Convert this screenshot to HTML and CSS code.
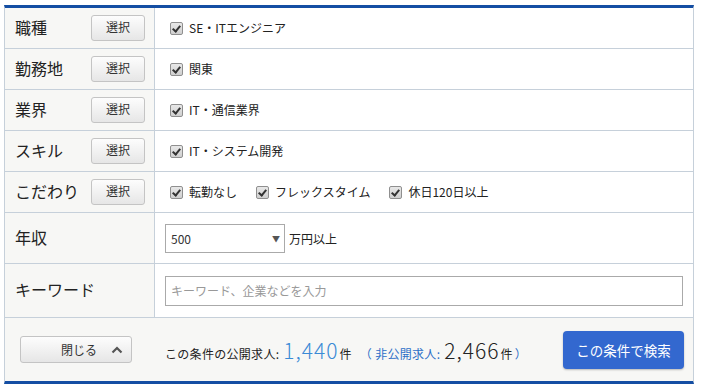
FILE: index.html
```html
<!DOCTYPE html>
<html lang="ja">
<head>
<meta charset="utf-8">
<link rel="stylesheet" href="styles.css">
</head>
<body>
<div class="panel">
  <div class="row">
    <div class="label"><span class="ltext">職種</span><button class="sel">選択</button></div>
    <div class="value"><span class="chk"><i class="box"></i>SE・ITエンジニア</span></div>
  </div>
  <div class="row">
    <div class="label"><span class="ltext">勤務地</span><button class="sel">選択</button></div>
    <div class="value"><span class="chk"><i class="box"></i>関東</span></div>
  </div>
  <div class="row">
    <div class="label"><span class="ltext">業界</span><button class="sel">選択</button></div>
    <div class="value"><span class="chk"><i class="box"></i>IT・通信業界</span></div>
  </div>
  <div class="row">
    <div class="label"><span class="ltext">スキル</span><button class="sel">選択</button></div>
    <div class="value"><span class="chk"><i class="box"></i>IT・システム開発</span></div>
  </div>
  <div class="row">
    <div class="label"><span class="ltext">こだわり</span><button class="sel">選択</button></div>
    <div class="value"><span class="chk"><i class="box"></i>転勤なし</span><span class="chk"><i class="box"></i>フレックスタイム</span><span class="chk"><i class="box"></i>休日120日以上</span></div>
  </div>
  <div class="row row-salary">
    <div class="label"><span class="ltext">年収</span></div>
    <div class="value"><div class="select"><span>500</span><span class="arrow">▼</span></div><span class="unit">万円以上</span></div>
  </div>
  <div class="row row-kw">
    <div class="label"><span class="ltext">キーワード</span></div>
    <div class="value"><div class="input">キーワード、企業などを入力</div></div>
  </div>
  <div class="footer">
    <button class="close"><span>閉じる</span><svg class="chev" width="12" height="8" viewBox="0 0 12 8"><path d="M1.5 6.5 L6 2 L10.5 6.5" fill="none" stroke="#555" stroke-width="2.2"/></svg></button>
    <div class="count">この条件の公開求人:<span class="num pub">1,440</span>件<span class="paren">（</span><span class="hid">非公開求人:</span><span class="num">2,466</span>件<span class="paren r">）</span></div>
    <button class="search">この条件で検索</button>
  </div>
</div>
</body>
</html>
```
FILE: styles.css
```css
* { box-sizing: border-box; }
body {
  margin: 5px 0 0 4px;
  font-family: "Noto Sans CJK JP", "Noto Sans", sans-serif;
  color: #222;
  background: #fff;
}
.panel {
  width: 690px;
  border-top: 3px solid #144ea3;
  border-left: 1px solid #c6d0da;
  border-right: 1px solid #c6d0da;
  border-bottom: 3px solid #144ea3;
}
.row {
  display: flex;
  height: 41px;
  border-bottom: 1px solid #c6d0da;
}
.row-salary { height: 51px; }
.row-kw { height: 54px; }
.label {
  width: 150px;
  flex: none;
  background: #f7f7f5;
  border-right: 1px solid #c6d0da;
  display: flex;
  align-items: center;
  justify-content: space-between;
  padding: 0 9px 0 10px;
}
.ltext {
  font-size: 16px;
  line-height: 20px;
  color: #222;
  margin-top: -3px;
}
.sel {
  width: 54px;
  height: 26px;
  border: 1px solid #c4c4c4;
  border-radius: 3px;
  background: linear-gradient(#fdfdfd, #e6e6e6);
  font-family: inherit;
  font-size: 12px;
  color: #333;
  padding: 0;
  line-height: 1;
  padding-bottom: 2px;
}
.value {
  flex: 1;
  display: flex;
  align-items: center;
  padding-left: 10px;
  font-size: 12px;
}
.chk {
  display: inline-flex;
  align-items: center;
  margin-right: 14px;
  line-height: 16px;
}
.box {
  width: 13px;
  height: 13px;
  margin: 0 6px 0 5px;
  border: 1px solid #8f8f8f;
  border-radius: 2px;
  background: linear-gradient(#e8e8e8, #cfcfcf);
  position: relative;
  display: inline-block;
}
.box::after {
  content: "";
  position: absolute;
  left: 3px;
  top: 1px;
  width: 3px;
  height: 6px;
  border-right: 2px solid #333;
  border-bottom: 2px solid #333;
  transform: rotate(40deg);
}
.select {
  width: 120px;
  height: 29px;
  border: 1px solid #aaa;
  background: #fff;
  display: flex;
  align-items: center;
  justify-content: space-between;
  padding: 0 4px 0 5px;
  font-size: 12px;
  color: #333;
}
.arrow {
  font-size: 8px;
  color: #555;
}
.unit {
  margin-left: 4px;
  font-size: 12px;
}
.input {
  width: 518px;
  height: 30px;
  border: 1px solid #aaa;
  display: flex;
  align-items: center;
  padding-left: 5px;
  font-size: 12px;
  color: #999;
}
.footer {
  height: 63px;
  background: #f7f7f5;
  display: flex;
  align-items: center;
  padding: 0 9px 0 15px;
}
.close {
  width: 112px;
  height: 27px;
  border: 1px solid #c4c4c4;
  border-radius: 3px;
  background: linear-gradient(#fdfdfd, #e6e6e6);
  font-family: inherit;
  font-size: 12px;
  color: #333;
  display: flex;
  align-items: center;
  padding: 0 8px 0 40px;
  justify-content: space-between;
}
.count {
  margin-left: 33px;
  font-size: 12px;
  letter-spacing: 0.3px;
  color: #222;
  display: flex;
  align-items: baseline;
  flex: 1;
}
.num {
  font-size: 21px;
  font-weight: 300;
  margin: 0 1px 0 4px;
  letter-spacing: 1px;
  color: #222;
}
.num.pub { color: #3a8ad6; }
.paren { margin: 0 3px 0 8px; color: #2d6fc7; }
.paren.r { margin: 0 0 0 2px; }
.hid { color: #2d6fc7; }
.search {
  width: 121px;
  height: 38px;
  border: none;
  border-radius: 4px;
  background: #3368cf;
  color: #fff;
  font-family: inherit;
  font-size: 13.5px;
  box-shadow: 0 1px 2px rgba(0,0,0,0.25);
}
```
